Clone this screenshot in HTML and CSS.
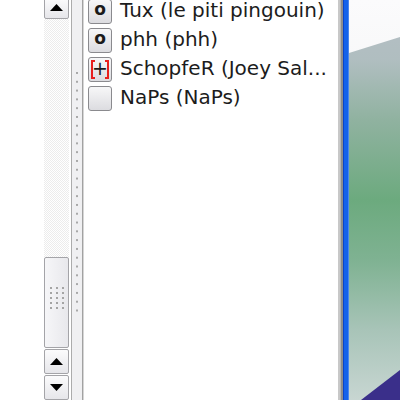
FILE: index.html
```html
<!DOCTYPE html>
<html>
<head>
<meta charset="utf-8">
<link rel="stylesheet" href="styles.css">
</head>
<body>
<div class="screen">
  <div class="gutter"></div>
  <div class="scrollbar">
    <div class="sb-btn sb-top"><svg width="13" height="7" viewBox="0 0 13 7"><polygon points="0,7 13,7 6.5,0" fill="#000"/></svg></div>
    <div class="sb-track"></div>
    <div class="sb-thumb"><div class="grip"></div></div>
    <div class="sb-btn sb-up"><svg width="13" height="7" viewBox="0 0 13 7"><polygon points="0,7 13,7 6.5,0" fill="#000"/></svg></div>
    <div class="sb-btn sb-down"><svg width="13" height="7" viewBox="0 0 13 7"><polygon points="0,0 13,0 6.5,7" fill="#000"/></svg></div>
  </div>
  <div class="splitter"><div class="split-dots"></div></div>
  <div class="list">
    <div class="row"><span class="box">o</span><span class="label">Tux (le piti pingouin)</span></div>
    <div class="row"><span class="box">o</span><span class="label">phh (phh)</span></div>
    <div class="row"><span class="box sel"><span class="br">+</span></span><span class="label">SchopfeR (Joey Sal...</span></div>
    <div class="row"><span class="box"></span><span class="label">NaPs (NaPs)</span></div>
  </div>
  <div class="frame"></div>
  <div class="desk"></div>
</div>
</body>
</html>
```
FILE: styles.css
```css
html, body {
  margin: 0;
  padding: 0;
  background: #fff;
}
.screen {
  width: 400px;
  height: 400px;
  overflow: hidden;
  display: flex;
  font-family: "DejaVu Sans", sans-serif;
}
.gutter {
  width: 44px;
  flex: none;
  background: #fff;
}
.scrollbar {
  width: 25px;
  flex: none;
  display: flex;
  flex-direction: column;
  margin-right: 2px;
}
.sb-btn {
  box-sizing: border-box;
  border: 1px solid #a4a4a8;
  border-radius: 2px;
  background: linear-gradient(#fbfbfc, #e6e6ea);
  display: flex;
  align-items: center;
  justify-content: center;
  flex: none;
}
.sb-btn svg { display: block; }
.sb-top {
  height: 21px;
  margin-top: -2px;
}
.sb-top svg { margin-top: -3px; }
.sb-track {
  flex: 1;
  background-color: #fff;
  background-image: linear-gradient(45deg, #ececec 25%, transparent 25%, transparent 75%, #ececec 75%),
                    linear-gradient(45deg, #ececec 25%, transparent 25%, transparent 75%, #ececec 75%);
  background-size: 2px 2px;
  background-position: 0 0, 1px 1px;
}
.sb-thumb {
  box-sizing: border-box;
  height: 91px;
  flex: none;
  border: 1px solid #a4a4a8;
  border-radius: 2px;
  background: linear-gradient(to right, #f6f6f8, #e8e8ec);
  display: flex;
  justify-content: center;
  padding-top: 29px;
}
.grip {
  width: 14px;
  height: 24px;
  background-image: radial-gradient(circle at 1px 1px, #a4a4a4 0 1.2px, transparent 1.3px);
  background-size: 6px 5px;
}
.sb-up {
  height: 25px;
  margin-top: 1px;
}
.sb-down {
  height: 25px;
  margin-top: 1px;
}
.splitter {
  width: 10px;
  flex: none;
  border-left: 1px solid #acacac;
  border-right: 1px solid #a2a2a2;
  box-shadow: 1px 0 0 #d6d6d6;
  background: #f0f0f2;
  margin-right: 1px;
}
.split-dots {
  margin: 72px 0 0 4px;
  width: 2px;
  height: 244px;
  background-image: linear-gradient(to bottom, #a8a8a8 0 2px, transparent 2px);
  background-size: 2px 8.8px;
}
.list {
  width: 254px;
  flex: none;
  background: #fff;
  padding-left: 4px;
  margin-top: -4px;
  box-sizing: border-box;
}
.row {
  display: flex;
  align-items: center;
  height: 29px;
}
.box {
  box-sizing: border-box;
  width: 24px;
  height: 25px;
  flex: none;
  border: 1px solid #8a8a8e;
  border-radius: 3px;
  background: linear-gradient(#f7f7f8, #dcdce0);
  display: flex;
  align-items: center;
  justify-content: center;
  font-weight: bold;
  font-size: 17px;
  line-height: 1;
  color: #1a1a1a;
  padding-bottom: 3px;
  margin-top: 1px;
}
.box.sel {
  padding: 2px;
}
.br {
  position: relative;
  width: 100%;
  height: 100%;
  box-sizing: border-box;
  display: flex;
  align-items: center;
  justify-content: center;
  border-left: 2px solid #e8201e;
  border-right: 2px solid #e8201e;
  font-weight: normal;
  font-size: 19px;
  padding-bottom: 1px;
}
.br::before, .br::after {
  content: "";
  position: absolute;
  left: -2px;
  right: -2px;
  height: 2px;
  border-left: 4px solid #e8201e;
  border-right: 4px solid #e8201e;
}
.br::before { top: 0; }
.br::after { bottom: 0; }
.label {
  margin-left: 8px;
  font-size: 20px;
  white-space: nowrap;
  color: #1c1c1c;
  line-height: 29px;
}
.frame {
  width: 11px;
  flex: none;
  background: linear-gradient(to right, #c8c8c8 0 2px, #b4b4b4 2px 3px, #8c8c8c 3px 5px, #0a44c8 5px 6px, #1462ea 6px 10px, #4a86ee 10px 11px);
}
.desk {
  flex: 1;
  position: relative;
  background: linear-gradient(to bottom, #b6bec6 0, #b0bec0 60px, #90b2a0 120px, #6caa7e 200px, #7fb292 260px, #a8c4b8 330px, #c8d6d2 400px);
}
.desk::before {
  content: "";
  position: absolute;
  inset: 0;
  background: linear-gradient(to bottom, #fbfbfc, #e6e8ea);
  clip-path: polygon(0 0, 100% 0, 100% 37px, 0 53px);
}
.desk::after {
  content: "";
  position: absolute;
  inset: 0;
  background: #3a2f8a;
  clip-path: polygon(100% 370px, 100% 100%, 12px 100%);
}
```
